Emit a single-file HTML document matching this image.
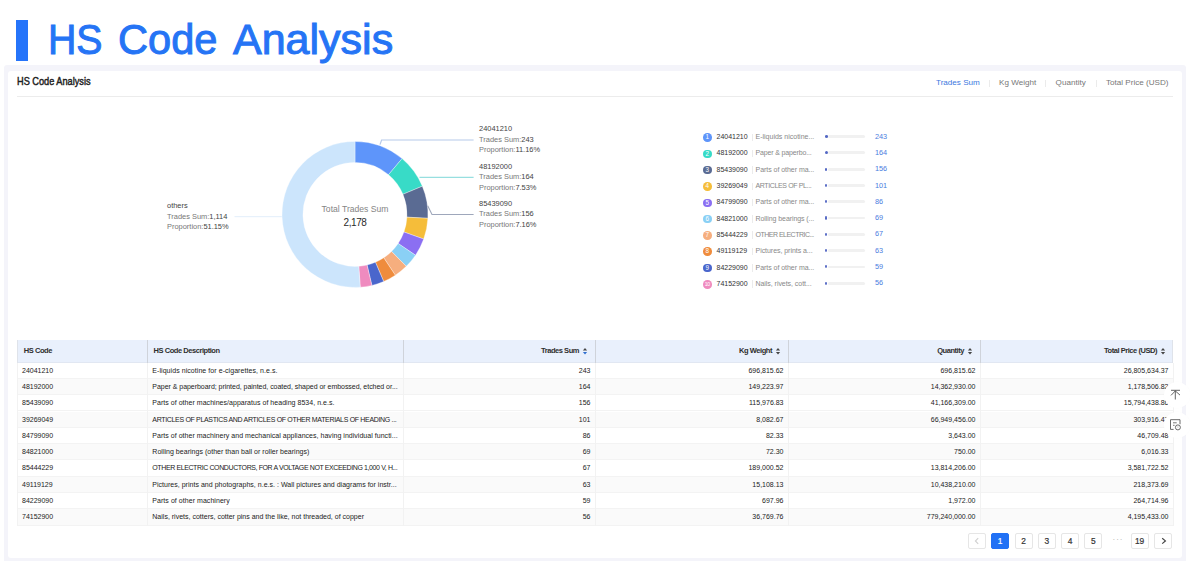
<!DOCTYPE html><html><head><meta charset="utf-8"><style>
*{margin:0;padding:0;box-sizing:border-box}
html,body{width:1190px;height:561px;overflow:hidden;background:#fff;font-family:"Liberation Sans", sans-serif}
.a{position:absolute;white-space:nowrap}
</style></head><body>
<div class="a" style="left:16px;top:20px;width:12px;height:41px;background:#2574fa"></div>
<div class="a" style="left:47.69px;top:15px;font-size:42px;line-height:50px;color:#2574f5;-webkit-text-stroke:1px #2574f5;transform:scaleX(0.935);transform-origin:0 0">HS</div>
<div class="a" style="left:117.73px;top:15px;font-size:42px;line-height:50px;color:#2574f5;-webkit-text-stroke:1px #2574f5;transform:scaleX(0.99);transform-origin:0 0">Code</div>
<div class="a" style="left:232.81px;top:15px;font-size:42px;line-height:50px;color:#2574f5;-webkit-text-stroke:1px #2574f5;transform:scaleX(1.024);transform-origin:0 0">Analysis</div>
<div class="a" style="left:3.6px;top:65.3px;width:1182.7px;height:500px;background:#f4f4fa;border-radius:3px"></div>
<div class="a" style="left:7.6px;top:70.6px;width:1174.7px;height:487px;background:#fff;border-radius:3px"></div>
<div class="a" style="left:17.2px;top:76.3px;font-size:10.4px;line-height:12px;color:#1f1f1f;-webkit-text-stroke:0.45px #1f1f1f;letter-spacing:0px;transform:scaleX(0.885);transform-origin:0 0">HS Code Analysis</div>
<div class="a" style="left:17px;top:96px;width:1156px;height:1px;background:#ececec"></div>

<div class="a" style="left:936px;top:77px;font-size:8.1px;line-height:11px;color:#3b78e0">Trades Sum</div>
<div class="a" style="left:999px;top:77px;font-size:8.1px;line-height:11px;color:#777">Kg Weight</div>
<div class="a" style="left:1055.6px;top:77px;font-size:8.1px;line-height:11px;color:#777">Quantity</div>
<div class="a" style="left:1106px;top:77px;font-size:8.1px;line-height:11px;color:#777">Total Price (USD)</div>
<div class="a" style="left:989px;top:79.5px;width:1px;height:7px;background:#ebebeb"></div>
<div class="a" style="left:1045.4px;top:79.5px;width:1px;height:7px;background:#ebebeb"></div>
<div class="a" style="left:1096.4px;top:79.5px;width:1px;height:7px;background:#ebebeb"></div>
<svg class="a" style="left:0;top:0" width="1190" height="561"><path d="M355.00,141.40A73,73 0 0 1 402.08,158.61L388.54,174.66A52,52 0 0 0 355.00,162.40Z" fill="#5e95fa" stroke="#fff" stroke-width="0.35"/>
<path d="M402.08,158.61A73,73 0 0 1 422.33,186.20L402.96,194.31A52,52 0 0 0 388.54,174.66Z" fill="#38dbc7" stroke="#fff" stroke-width="0.35"/>
<path d="M422.33,186.20A73,73 0 0 1 427.90,218.29L406.93,217.17A52,52 0 0 0 402.96,194.31Z" fill="#5a6b93" stroke="#fff" stroke-width="0.35"/>
<path d="M427.90,218.29A73,73 0 0 1 423.70,239.07L403.94,231.97A52,52 0 0 0 406.93,217.17Z" fill="#f5bd3a" stroke="#fff" stroke-width="0.35"/>
<path d="M423.70,239.07A73,73 0 0 1 415.54,255.19L398.13,243.45A52,52 0 0 0 403.94,231.97Z" fill="#8b6ff2" stroke="#fff" stroke-width="0.35"/>
<path d="M415.54,255.19A73,73 0 0 1 406.28,266.35L391.53,251.41A52,52 0 0 0 398.13,243.45Z" fill="#8ad0f5" stroke="#fff" stroke-width="0.35"/>
<path d="M406.28,266.35A73,73 0 0 1 395.35,275.24L383.74,257.74A52,52 0 0 0 391.53,251.41Z" fill="#f6ae7e" stroke="#fff" stroke-width="0.35"/>
<path d="M395.35,275.24A73,73 0 0 1 383.69,281.53L375.44,262.22A52,52 0 0 0 383.74,257.74Z" fill="#ef8c3d" stroke="#fff" stroke-width="0.35"/>
<path d="M383.69,281.53A73,73 0 0 1 371.90,285.42L367.04,264.99A52,52 0 0 0 375.44,262.22Z" fill="#4a66cc" stroke="#fff" stroke-width="0.35"/>
<path d="M371.90,285.42A73,73 0 0 1 360.26,287.21L358.75,266.26A52,52 0 0 0 367.04,264.99Z" fill="#ef8bbf" stroke="#fff" stroke-width="0.35"/>
<path d="M360.26,287.21A73,73 0 1 1 355.00,141.40L355.00,162.40A52,52 0 1 0 358.75,266.26Z" fill="#cce5fc" stroke="#fff" stroke-width="0.35"/>
<polyline points="380,144.6 381.6,140 473.6,140" fill="none" stroke="#b6c9ea" stroke-width="1.2"/>
<polyline points="419.5,177.4 473.6,177.4" fill="none" stroke="#97dfe0" stroke-width="1.1"/>
<polyline points="427.7,205.8 432,214.5 473.6,214.5" fill="none" stroke="#9ea7bb" stroke-width="1.1"/>
<polyline points="234.5,216.7 281.8,216.7" fill="none" stroke="#e2eefb" stroke-width="1"/>
</svg>
<div class="a" style="left:0;width:710px;top:202.6px;text-align:center;font-size:8.6px;line-height:12px;color:#858585">Total Trades Sum</div>
<div class="a" style="left:0;width:710px;top:217.4px;text-align:center;font-size:10px;line-height:12px;letter-spacing:-0.45px;color:#2b2b2b">2,178</div>
<div class="a" style="left:479px;top:124.2px;font-size:7.45px;line-height:10.5px;color:#777"><span style="color:#444">24041210</span><br>Trades Sum:<span style="color:#444">243</span><br>Proportion:<span style="color:#444">11.16%</span></div>
<div class="a" style="left:479px;top:161.9px;font-size:7.45px;line-height:10.5px;color:#777"><span style="color:#444">48192000</span><br>Trades Sum:<span style="color:#444">164</span><br>Proportion:<span style="color:#444">7.53%</span></div>
<div class="a" style="left:479px;top:198.7px;font-size:7.45px;line-height:10.5px;color:#777"><span style="color:#444">85439090</span><br>Trades Sum:<span style="color:#444">156</span><br>Proportion:<span style="color:#444">7.16%</span></div>
<div class="a" style="left:167px;top:201.4px;font-size:7.45px;line-height:10.5px;color:#777"><span style="color:#444">others</span><br>Trades Sum:<span style="color:#444">1,114</span><br>Proportion:<span style="color:#444">51.15%</span></div>
<div class="a" style="left:703px;top:133.3px;width:8.6px;height:8.6px;border-radius:50%;background:#5e95fa;color:#fff;font-size:6.3px;line-height:8.6px;text-align:center;letter-spacing:0px">1</div>
<div class="a" style="left:716.5px;top:132.1px;font-size:7px;line-height:10px;color:#333">24041210</div>
<div class="a" style="left:751.5px;top:133.6px;width:1px;height:7.5px;background:#ebebeb"></div>
<div class="a" style="left:755.5px;top:132.1px;font-size:7px;line-height:10px;letter-spacing:0.003px;color:#888">E-liquids nicotine...</div>
<div class="a" style="left:828px;top:135.1px;width:37px;height:2.9px;border-radius:2px;background:#f1f1f1"></div>
<div class="a" style="left:824.6px;top:134.9px;width:3.9px;height:3.2px;border-radius:50%;background:#5468c4"></div>
<div class="a" style="left:875px;top:131.6px;font-size:7.3px;line-height:10px;color:#4a7de0">243</div>
<div class="a" style="left:703px;top:149.6px;width:8.6px;height:8.6px;border-radius:50%;background:#38dbc7;color:#fff;font-size:6.3px;line-height:8.6px;text-align:center;letter-spacing:0px">2</div>
<div class="a" style="left:716.5px;top:148.4px;font-size:7px;line-height:10px;color:#333">48192000</div>
<div class="a" style="left:751.5px;top:149.9px;width:1px;height:7.5px;background:#ebebeb"></div>
<div class="a" style="left:755.5px;top:148.4px;font-size:7px;line-height:10px;letter-spacing:-0.150px;color:#888">Paper &amp; paperbo...</div>
<div class="a" style="left:828px;top:151.4px;width:37px;height:2.9px;border-radius:2px;background:#f1f1f1"></div>
<div class="a" style="left:824.6px;top:151.2px;width:3.0px;height:3.2px;border-radius:50%;background:#5468c4"></div>
<div class="a" style="left:875px;top:147.9px;font-size:7.3px;line-height:10px;color:#4a7de0">164</div>
<div class="a" style="left:703px;top:165.9px;width:8.6px;height:8.6px;border-radius:50%;background:#5a6b93;color:#fff;font-size:6.3px;line-height:8.6px;text-align:center;letter-spacing:0px">3</div>
<div class="a" style="left:716.5px;top:164.7px;font-size:7px;line-height:10px;color:#333">85439090</div>
<div class="a" style="left:751.5px;top:166.2px;width:1px;height:7.5px;background:#ebebeb"></div>
<div class="a" style="left:755.5px;top:164.7px;font-size:7px;line-height:10px;letter-spacing:-0.038px;color:#888">Parts of other ma...</div>
<div class="a" style="left:828px;top:167.7px;width:37px;height:2.9px;border-radius:2px;background:#f1f1f1"></div>
<div class="a" style="left:824.6px;top:167.5px;width:2.9px;height:3.2px;border-radius:50%;background:#5468c4"></div>
<div class="a" style="left:875px;top:164.2px;font-size:7.3px;line-height:10px;color:#4a7de0">156</div>
<div class="a" style="left:703px;top:182.2px;width:8.6px;height:8.6px;border-radius:50%;background:#f5bd3a;color:#fff;font-size:6.3px;line-height:8.6px;text-align:center;letter-spacing:0px">4</div>
<div class="a" style="left:716.5px;top:181.0px;font-size:7px;line-height:10px;color:#333">39269049</div>
<div class="a" style="left:751.5px;top:182.5px;width:1px;height:7.5px;background:#ebebeb"></div>
<div class="a" style="left:755.5px;top:181.0px;font-size:7px;line-height:10px;letter-spacing:-0.369px;color:#888">ARTICLES OF PL...</div>
<div class="a" style="left:828px;top:184.0px;width:37px;height:2.9px;border-radius:2px;background:#f1f1f1"></div>
<div class="a" style="left:824.6px;top:183.8px;width:2.3px;height:3.2px;border-radius:50%;background:#5468c4"></div>
<div class="a" style="left:875px;top:180.5px;font-size:7.3px;line-height:10px;color:#4a7de0">101</div>
<div class="a" style="left:703px;top:198.5px;width:8.6px;height:8.6px;border-radius:50%;background:#8b6ff2;color:#fff;font-size:6.3px;line-height:8.6px;text-align:center;letter-spacing:0px">5</div>
<div class="a" style="left:716.5px;top:197.3px;font-size:7px;line-height:10px;color:#333">84799090</div>
<div class="a" style="left:751.5px;top:198.8px;width:1px;height:7.5px;background:#ebebeb"></div>
<div class="a" style="left:755.5px;top:197.3px;font-size:7px;line-height:10px;letter-spacing:-0.038px;color:#888">Parts of other ma...</div>
<div class="a" style="left:828px;top:200.3px;width:37px;height:2.9px;border-radius:2px;background:#f1f1f1"></div>
<div class="a" style="left:824.6px;top:200.1px;width:2.3px;height:3.2px;border-radius:50%;background:#5468c4"></div>
<div class="a" style="left:875px;top:196.8px;font-size:7.3px;line-height:10px;color:#4a7de0">86</div>
<div class="a" style="left:703px;top:214.8px;width:8.6px;height:8.6px;border-radius:50%;background:#8ad0f5;color:#fff;font-size:6.3px;line-height:8.6px;text-align:center;letter-spacing:0px">6</div>
<div class="a" style="left:716.5px;top:213.6px;font-size:7px;line-height:10px;color:#333">84821000</div>
<div class="a" style="left:751.5px;top:215.1px;width:1px;height:7.5px;background:#ebebeb"></div>
<div class="a" style="left:755.5px;top:213.6px;font-size:7px;line-height:10px;letter-spacing:-0.075px;color:#888">Rolling bearings (...</div>
<div class="a" style="left:828px;top:216.6px;width:37px;height:2.9px;border-radius:2px;background:#f1f1f1"></div>
<div class="a" style="left:824.6px;top:216.4px;width:2.3px;height:3.2px;border-radius:50%;background:#5468c4"></div>
<div class="a" style="left:875px;top:213.1px;font-size:7.3px;line-height:10px;color:#4a7de0">69</div>
<div class="a" style="left:703px;top:231.1px;width:8.6px;height:8.6px;border-radius:50%;background:#f6ae7e;color:#fff;font-size:6.3px;line-height:8.6px;text-align:center;letter-spacing:0px">7</div>
<div class="a" style="left:716.5px;top:229.9px;font-size:7px;line-height:10px;color:#333">85444229</div>
<div class="a" style="left:751.5px;top:231.4px;width:1px;height:7.5px;background:#ebebeb"></div>
<div class="a" style="left:755.5px;top:229.9px;font-size:7px;line-height:10px;letter-spacing:-0.506px;color:#888">OTHER ELECTRIC...</div>
<div class="a" style="left:828px;top:232.9px;width:37px;height:2.9px;border-radius:2px;background:#f1f1f1"></div>
<div class="a" style="left:824.6px;top:232.7px;width:2.3px;height:3.2px;border-radius:50%;background:#5468c4"></div>
<div class="a" style="left:875px;top:229.4px;font-size:7.3px;line-height:10px;color:#4a7de0">67</div>
<div class="a" style="left:703px;top:247.4px;width:8.6px;height:8.6px;border-radius:50%;background:#ef8c3d;color:#fff;font-size:6.3px;line-height:8.6px;text-align:center;letter-spacing:0px">8</div>
<div class="a" style="left:716.5px;top:246.2px;font-size:7px;line-height:10px;color:#333">49119129</div>
<div class="a" style="left:751.5px;top:247.7px;width:1px;height:7.5px;background:#ebebeb"></div>
<div class="a" style="left:755.5px;top:246.2px;font-size:7px;line-height:10px;letter-spacing:-0.043px;color:#888">Pictures, prints a...</div>
<div class="a" style="left:828px;top:249.2px;width:37px;height:2.9px;border-radius:2px;background:#f1f1f1"></div>
<div class="a" style="left:824.6px;top:249.0px;width:2.3px;height:3.2px;border-radius:50%;background:#5468c4"></div>
<div class="a" style="left:875px;top:245.7px;font-size:7.3px;line-height:10px;color:#4a7de0">63</div>
<div class="a" style="left:703px;top:263.7px;width:8.6px;height:8.6px;border-radius:50%;background:#4a66cc;color:#fff;font-size:6.3px;line-height:8.6px;text-align:center;letter-spacing:0px">9</div>
<div class="a" style="left:716.5px;top:262.5px;font-size:7px;line-height:10px;color:#333">84229090</div>
<div class="a" style="left:751.5px;top:264.0px;width:1px;height:7.5px;background:#ebebeb"></div>
<div class="a" style="left:755.5px;top:262.5px;font-size:7px;line-height:10px;letter-spacing:-0.038px;color:#888">Parts of other ma...</div>
<div class="a" style="left:828px;top:265.5px;width:37px;height:2.9px;border-radius:2px;background:#f1f1f1"></div>
<div class="a" style="left:824.6px;top:265.3px;width:2.3px;height:3.2px;border-radius:50%;background:#5468c4"></div>
<div class="a" style="left:875px;top:262.0px;font-size:7.3px;line-height:10px;color:#4a7de0">59</div>
<div class="a" style="left:703px;top:280.0px;width:8.6px;height:8.6px;border-radius:50%;background:#ef8bbf;color:#fff;font-size:5.2px;line-height:8.6px;text-align:center;letter-spacing:-0.4px">10</div>
<div class="a" style="left:716.5px;top:278.8px;font-size:7px;line-height:10px;color:#333">74152900</div>
<div class="a" style="left:751.5px;top:280.3px;width:1px;height:7.5px;background:#ebebeb"></div>
<div class="a" style="left:755.5px;top:278.8px;font-size:7px;line-height:10px;letter-spacing:-0.047px;color:#888">Nails, rivets, cott...</div>
<div class="a" style="left:828px;top:281.8px;width:37px;height:2.9px;border-radius:2px;background:#f1f1f1"></div>
<div class="a" style="left:824.6px;top:281.6px;width:2.3px;height:3.2px;border-radius:50%;background:#5468c4"></div>
<div class="a" style="left:875px;top:278.3px;font-size:7.3px;line-height:10px;color:#4a7de0">56</div>
<div class="a" style="left:17px;top:340px;width:1156px;height:22.6px;background:#e9f0fc;border-bottom:1px solid #e1e7f2"></div>
<div class="a" style="left:17px;top:340px;width:1px;height:22.6px;background:#dfe3ea"></div>
<div class="a" style="left:147px;top:340px;width:1px;height:22.6px;background:#cfd3da"></div>
<div class="a" style="left:403px;top:340px;width:1px;height:22.6px;background:#cfd3da"></div>
<div class="a" style="left:595px;top:340px;width:1px;height:22.6px;background:#cfd3da"></div>
<div class="a" style="left:788px;top:340px;width:1px;height:22.6px;background:#cfd3da"></div>
<div class="a" style="left:980px;top:340px;width:1px;height:22.6px;background:#cfd3da"></div>
<div class="a" style="left:1172px;top:340px;width:1px;height:22.6px;background:#dfe3ea"></div>
<div class="a" style="left:23.8px;top:345.6px;font-size:7.5px;line-height:10px;font-weight:bold;letter-spacing:-0.45px;color:#2e2e2e">HS Code</div>
<div class="a" style="left:153.6px;top:345.6px;font-size:7.5px;line-height:10px;font-weight:bold;letter-spacing:-0.45px;color:#2e2e2e">HS Code Description</div>
<div class="a" style="left:403px;width:176px;top:346px;text-align:right;font-size:7.5px;line-height:10px;font-weight:bold;letter-spacing:-0.45px;color:#2e2e2e">Trades Sum</div>
<svg class="a" style="left:581.7px;top:347px" width="6" height="9"><path d="M0.9,3.4L3,1L5.1,3.4Z" fill="#444"/><path d="M0.9,4.9L3,7.4L5.1,4.9Z" fill="#2f6fd0"/></svg>
<div class="a" style="left:595px;width:177px;top:346px;text-align:right;font-size:7.5px;line-height:10px;font-weight:bold;letter-spacing:-0.45px;color:#2e2e2e">Kg Weight</div>
<svg class="a" style="left:774.7px;top:347px" width="6" height="9"><path d="M0.9,3.4L3,1L5.1,3.4Z" fill="#444"/><path d="M0.9,4.9L3,7.4L5.1,4.9Z" fill="#444"/></svg>
<div class="a" style="left:788px;width:176px;top:346px;text-align:right;font-size:7.5px;line-height:10px;font-weight:bold;letter-spacing:-0.45px;color:#2e2e2e">Quantity</div>
<svg class="a" style="left:966.7px;top:347px" width="6" height="9"><path d="M0.9,3.4L3,1L5.1,3.4Z" fill="#444"/><path d="M0.9,4.9L3,7.4L5.1,4.9Z" fill="#444"/></svg>
<div class="a" style="left:980px;width:177px;top:346px;text-align:right;font-size:7.5px;line-height:10px;font-weight:bold;letter-spacing:-0.45px;color:#2e2e2e">Total Price (USD)</div>
<svg class="a" style="left:1159.7px;top:347px" width="6" height="9"><path d="M0.9,3.4L3,1L5.1,3.4Z" fill="#444"/><path d="M0.9,4.9L3,7.4L5.1,4.9Z" fill="#444"/></svg>
<div class="a" style="left:17px;top:362.6px;width:1156px;height:16.3px;background:#fff;border-bottom:1px solid #f3f3f3"></div>
<div class="a" style="left:22px;top:365.6px;font-size:7px;line-height:10px;color:#222">24041210</div>
<div class="a" style="left:152.3px;top:365.6px;font-size:7px;line-height:10px;letter-spacing:0.061px;color:#222">E-liquids nicotine for e-cigarettes, n.e.s.</div>
<div class="a" style="left:403px;width:187.5px;top:365.6px;text-align:right;font-size:7px;line-height:10px;color:#222">243</div>
<div class="a" style="left:595px;width:188.5px;top:365.6px;text-align:right;font-size:7px;line-height:10px;color:#222">696,815.62</div>
<div class="a" style="left:788px;width:187.5px;top:365.6px;text-align:right;font-size:7px;line-height:10px;color:#222">696,815.62</div>
<div class="a" style="left:980px;width:188.5px;top:365.6px;text-align:right;font-size:7px;line-height:10px;color:#222">26,805,634.37</div>
<div class="a" style="left:17px;top:378.9px;width:1156px;height:16.3px;background:#fafafa;border-bottom:1px solid #f3f3f3"></div>
<div class="a" style="left:22px;top:381.9px;font-size:7px;line-height:10px;color:#222">48192000</div>
<div class="a" style="left:152.3px;top:381.9px;font-size:7px;line-height:10px;letter-spacing:-0.033px;color:#222">Paper &amp; paperboard; printed, painted, coated, shaped or embossed, etched or...</div>
<div class="a" style="left:403px;width:187.5px;top:381.9px;text-align:right;font-size:7px;line-height:10px;color:#222">164</div>
<div class="a" style="left:595px;width:188.5px;top:381.9px;text-align:right;font-size:7px;line-height:10px;color:#222">149,223.97</div>
<div class="a" style="left:788px;width:187.5px;top:381.9px;text-align:right;font-size:7px;line-height:10px;color:#222">14,362,930.00</div>
<div class="a" style="left:980px;width:188.5px;top:381.9px;text-align:right;font-size:7px;line-height:10px;color:#222">1,178,506.82</div>
<div class="a" style="left:17px;top:395.2px;width:1156px;height:16.3px;background:#fff;border-bottom:1px solid #f3f3f3"></div>
<div class="a" style="left:22px;top:398.2px;font-size:7px;line-height:10px;color:#222">85439090</div>
<div class="a" style="left:152.3px;top:398.2px;font-size:7px;line-height:10px;letter-spacing:0.036px;color:#222">Parts of other machines/apparatus of heading 8534, n.e.s.</div>
<div class="a" style="left:403px;width:187.5px;top:398.2px;text-align:right;font-size:7px;line-height:10px;color:#222">156</div>
<div class="a" style="left:595px;width:188.5px;top:398.2px;text-align:right;font-size:7px;line-height:10px;color:#222">115,976.83</div>
<div class="a" style="left:788px;width:187.5px;top:398.2px;text-align:right;font-size:7px;line-height:10px;color:#222">41,166,309.00</div>
<div class="a" style="left:980px;width:188.5px;top:398.2px;text-align:right;font-size:7px;line-height:10px;color:#222">15,794,438.86</div>
<div class="a" style="left:17px;top:411.5px;width:1156px;height:16.3px;background:#fafafa;border-bottom:1px solid #f3f3f3"></div>
<div class="a" style="left:22px;top:414.5px;font-size:7px;line-height:10px;color:#222">39269049</div>
<div class="a" style="left:152.3px;top:414.5px;font-size:7px;line-height:10px;letter-spacing:-0.328px;color:#222">ARTICLES OF PLASTICS AND ARTICLES OF OTHER MATERIALS OF HEADING ...</div>
<div class="a" style="left:403px;width:187.5px;top:414.5px;text-align:right;font-size:7px;line-height:10px;color:#222">101</div>
<div class="a" style="left:595px;width:188.5px;top:414.5px;text-align:right;font-size:7px;line-height:10px;color:#222">8,082.67</div>
<div class="a" style="left:788px;width:187.5px;top:414.5px;text-align:right;font-size:7px;line-height:10px;color:#222">66,949,456.00</div>
<div class="a" style="left:980px;width:188.5px;top:414.5px;text-align:right;font-size:7px;line-height:10px;color:#222">303,916.47</div>
<div class="a" style="left:17px;top:427.8px;width:1156px;height:16.3px;background:#fff;border-bottom:1px solid #f3f3f3"></div>
<div class="a" style="left:22px;top:430.8px;font-size:7px;line-height:10px;color:#222">84799090</div>
<div class="a" style="left:152.3px;top:430.8px;font-size:7px;line-height:10px;letter-spacing:0.032px;color:#222">Parts of other machinery and mechanical appliances, having individual functi...</div>
<div class="a" style="left:403px;width:187.5px;top:430.8px;text-align:right;font-size:7px;line-height:10px;color:#222">86</div>
<div class="a" style="left:595px;width:188.5px;top:430.8px;text-align:right;font-size:7px;line-height:10px;color:#222">82.33</div>
<div class="a" style="left:788px;width:187.5px;top:430.8px;text-align:right;font-size:7px;line-height:10px;color:#222">3,643.00</div>
<div class="a" style="left:980px;width:188.5px;top:430.8px;text-align:right;font-size:7px;line-height:10px;color:#222">46,709.48</div>
<div class="a" style="left:17px;top:444.1px;width:1156px;height:16.3px;background:#fafafa;border-bottom:1px solid #f3f3f3"></div>
<div class="a" style="left:22px;top:447.1px;font-size:7px;line-height:10px;color:#222">84821000</div>
<div class="a" style="left:152.3px;top:447.1px;font-size:7px;line-height:10px;letter-spacing:0.028px;color:#222">Rolling bearings (other than ball or roller bearings)</div>
<div class="a" style="left:403px;width:187.5px;top:447.1px;text-align:right;font-size:7px;line-height:10px;color:#222">69</div>
<div class="a" style="left:595px;width:188.5px;top:447.1px;text-align:right;font-size:7px;line-height:10px;color:#222">72.30</div>
<div class="a" style="left:788px;width:187.5px;top:447.1px;text-align:right;font-size:7px;line-height:10px;color:#222">750.00</div>
<div class="a" style="left:980px;width:188.5px;top:447.1px;text-align:right;font-size:7px;line-height:10px;color:#222">6,016.33</div>
<div class="a" style="left:17px;top:460.4px;width:1156px;height:16.3px;background:#fff;border-bottom:1px solid #f3f3f3"></div>
<div class="a" style="left:22px;top:463.4px;font-size:7px;line-height:10px;color:#222">85444229</div>
<div class="a" style="left:152.3px;top:463.4px;font-size:7px;line-height:10px;letter-spacing:-0.391px;color:#222">OTHER ELECTRIC CONDUCTORS, FOR A VOLTAGE NOT EXCEEDING 1,000 V, H...</div>
<div class="a" style="left:403px;width:187.5px;top:463.4px;text-align:right;font-size:7px;line-height:10px;color:#222">67</div>
<div class="a" style="left:595px;width:188.5px;top:463.4px;text-align:right;font-size:7px;line-height:10px;color:#222">189,000.52</div>
<div class="a" style="left:788px;width:187.5px;top:463.4px;text-align:right;font-size:7px;line-height:10px;color:#222">13,814,206.00</div>
<div class="a" style="left:980px;width:188.5px;top:463.4px;text-align:right;font-size:7px;line-height:10px;color:#222">3,581,722.52</div>
<div class="a" style="left:17px;top:476.7px;width:1156px;height:16.3px;background:#fafafa;border-bottom:1px solid #f3f3f3"></div>
<div class="a" style="left:22px;top:479.7px;font-size:7px;line-height:10px;color:#222">49119129</div>
<div class="a" style="left:152.3px;top:479.7px;font-size:7px;line-height:10px;letter-spacing:0.023px;color:#222">Pictures, prints and photographs, n.e.s. : Wall pictures and diagrams for instr...</div>
<div class="a" style="left:403px;width:187.5px;top:479.7px;text-align:right;font-size:7px;line-height:10px;color:#222">63</div>
<div class="a" style="left:595px;width:188.5px;top:479.7px;text-align:right;font-size:7px;line-height:10px;color:#222">15,108.13</div>
<div class="a" style="left:788px;width:187.5px;top:479.7px;text-align:right;font-size:7px;line-height:10px;color:#222">10,438,210.00</div>
<div class="a" style="left:980px;width:188.5px;top:479.7px;text-align:right;font-size:7px;line-height:10px;color:#222">218,373.69</div>
<div class="a" style="left:17px;top:493.0px;width:1156px;height:16.3px;background:#fff;border-bottom:1px solid #f3f3f3"></div>
<div class="a" style="left:22px;top:496.0px;font-size:7px;line-height:10px;color:#222">84229090</div>
<div class="a" style="left:152.3px;top:496.0px;font-size:7px;line-height:10px;letter-spacing:0.050px;color:#222">Parts of other machinery</div>
<div class="a" style="left:403px;width:187.5px;top:496.0px;text-align:right;font-size:7px;line-height:10px;color:#222">59</div>
<div class="a" style="left:595px;width:188.5px;top:496.0px;text-align:right;font-size:7px;line-height:10px;color:#222">697.96</div>
<div class="a" style="left:788px;width:187.5px;top:496.0px;text-align:right;font-size:7px;line-height:10px;color:#222">1,972.00</div>
<div class="a" style="left:980px;width:188.5px;top:496.0px;text-align:right;font-size:7px;line-height:10px;color:#222">264,714.96</div>
<div class="a" style="left:17px;top:509.3px;width:1156px;height:16.3px;background:#fafafa;border-bottom:1px solid #f3f3f3"></div>
<div class="a" style="left:22px;top:512.3px;font-size:7px;line-height:10px;color:#222">74152900</div>
<div class="a" style="left:152.3px;top:512.3px;font-size:7px;line-height:10px;letter-spacing:0.006px;color:#222">Nails, rivets, cotters, cotter pins and the like, not threaded, of copper</div>
<div class="a" style="left:403px;width:187.5px;top:512.3px;text-align:right;font-size:7px;line-height:10px;color:#222">56</div>
<div class="a" style="left:595px;width:188.5px;top:512.3px;text-align:right;font-size:7px;line-height:10px;color:#222">36,769.76</div>
<div class="a" style="left:788px;width:187.5px;top:512.3px;text-align:right;font-size:7px;line-height:10px;color:#222">779,240,000.00</div>
<div class="a" style="left:980px;width:188.5px;top:512.3px;text-align:right;font-size:7px;line-height:10px;color:#222">4,195,433.00</div>
<div class="a" style="left:17px;top:362.6px;width:1px;height:163.0px;background:#f2f2f2"></div>
<div class="a" style="left:147px;top:362.6px;width:1px;height:163.0px;background:#f2f2f2"></div>
<div class="a" style="left:403px;top:362.6px;width:1px;height:163.0px;background:#f2f2f2"></div>
<div class="a" style="left:595px;top:362.6px;width:1px;height:163.0px;background:#f2f2f2"></div>
<div class="a" style="left:788px;top:362.6px;width:1px;height:163.0px;background:#f2f2f2"></div>
<div class="a" style="left:980px;top:362.6px;width:1px;height:163.0px;background:#f2f2f2"></div>
<div class="a" style="left:1173px;top:362.6px;width:1px;height:163.0px;background:#f2f2f2"></div>
<div class="a" style="left:968px;top:533.2px;width:18px;height:16.3px;border:1px solid #e6e6e6;border-radius:2px;background:#fff;color:#333;font-size:8.4px;line-height:14.3px;text-align:center;-webkit-text-stroke:0.2px #333"></div>
<div class="a" style="left:991.2px;top:533.2px;width:18px;height:16.3px;border:1px solid #2171f5;border-radius:2px;background:#2171f5;color:#fff;font-size:8.4px;line-height:14.3px;text-align:center;-webkit-text-stroke:0.2px #fff">1</div>
<div class="a" style="left:1014.7px;top:533.2px;width:18px;height:16.3px;border:1px solid #e6e6e6;border-radius:2px;background:#fff;color:#333;font-size:8.4px;line-height:14.3px;text-align:center;-webkit-text-stroke:0.2px #333">2</div>
<div class="a" style="left:1037.8px;top:533.2px;width:18px;height:16.3px;border:1px solid #e6e6e6;border-radius:2px;background:#fff;color:#333;font-size:8.4px;line-height:14.3px;text-align:center;-webkit-text-stroke:0.2px #333">3</div>
<div class="a" style="left:1061px;top:533.2px;width:18px;height:16.3px;border:1px solid #e6e6e6;border-radius:2px;background:#fff;color:#333;font-size:8.4px;line-height:14.3px;text-align:center;-webkit-text-stroke:0.2px #333">4</div>
<div class="a" style="left:1084.4px;top:533.2px;width:18px;height:16.3px;border:1px solid #e6e6e6;border-radius:2px;background:#fff;color:#333;font-size:8.4px;line-height:14.3px;text-align:center;-webkit-text-stroke:0.2px #333">5</div>
<div class="a" style="left:1130.6px;top:533.2px;width:18px;height:16.3px;border:1px solid #e6e6e6;border-radius:2px;background:#fff;color:#333;font-size:8.4px;line-height:14.3px;text-align:center;-webkit-text-stroke:0.2px #333">19</div>
<div class="a" style="left:1154.4px;top:533.2px;width:18px;height:16.3px;border:1px solid #e6e6e6;border-radius:2px;background:#fff;color:#333;font-size:8.4px;line-height:14.3px;text-align:center;-webkit-text-stroke:0.2px #333"> </div>
<svg class="a" style="left:974.3px;top:537px" width="6" height="8"><polyline points="4.2,1.2 1.4,4 4.2,6.8" fill="none" stroke="#d0d0d0" stroke-width="1.1"/></svg>
<svg class="a" style="left:1160.7px;top:537px" width="6" height="8"><polyline points="1.2,1.2 4.4,3.9 1.2,6.6" fill="none" stroke="#444" stroke-width="1.2"/></svg>
<div class="a" style="left:1163.5px;top:382px;width:26px;height:26px;border-radius:50%;background:#fff;box-shadow:0 0 2px rgba(0,0,0,0.02)"></div>
<div class="a" style="left:1163.5px;top:411.5px;width:26px;height:26px;border-radius:50%;background:#fff;box-shadow:0 0 2px rgba(0,0,0,0.02)"></div>
<svg class="a" style="left:1165px;top:384px" width="22" height="22"><path d="M6,6.3 H15 M10.3,6.8 V15.5 M6,11.4 L10.3,6.9 L15,11.1" fill="none" stroke="#484848" stroke-width="0.85"/></svg>
<svg class="a" style="left:1165px;top:413px" width="22" height="22"><path d="M8.6,16.4 H5.5 V6.7 H15 V11.2" fill="none" stroke="#5a5a5a" stroke-width="0.9"/><path d="M8,9.8 H11.7 M8,12.3 H9.6" stroke="#6a6a6a" stroke-width="0.9"/><circle cx="12.9" cy="14.4" r="2.5" fill="#fff" stroke="#5a5a5a" stroke-width="0.9"/><path d="M12.9,13.6 V14.6" fill="none" stroke="#777" stroke-width="0.6"/></svg>
<div class="a" style="left:1111px;top:533.5px;width:14px;text-align:center;font-size:8px;line-height:12px;color:#aaa;letter-spacing:1px">···</div>
</body></html>
